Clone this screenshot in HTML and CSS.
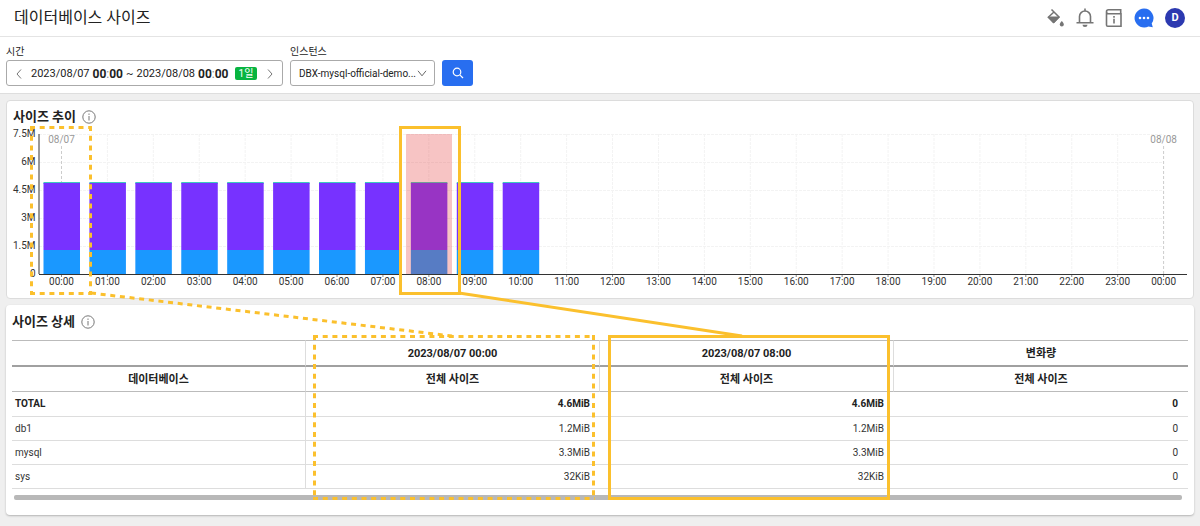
FILE: index.html
```html
<!DOCTYPE html>
<html lang="ko">
<head>
<meta charset="utf-8">
<title>데이터베이스 사이즈</title>
<meta name="viewport" content="width=device-width, initial-scale=1">
<link rel="stylesheet" href="styles.css">
</head>
<body>
<header class="topbar">
  <h1 class="page-title">데이터베이스 사이즈</h1>
  <nav class="tools" aria-label="도구">
    <button class="icon-button" aria-label="테마">
      <svg width="18" height="20" viewBox="0 0 18 20"><path d="M4.500 1.500l7.500 7.500-5.500 5.500L1.300 9.200 7.500 3.500" fill="none" stroke="#757575" stroke-width="1.500"/><path d="M1.300 9h11L6.700 15z" fill="#757575" stroke="#757575" stroke-linejoin="round"/><path d="M14.800 13c1.400 1.500 2 2.500 2 3.400a2 2 0 0 1-4 0c0-.9.600-1.900 2-3.400z" fill="#757575"/></svg>
    </button>
    <button class="icon-button" aria-label="알림">
      <svg width="18" height="20" viewBox="0 0 18 20"><path d="M.5 14.800h17M3.500 14.800V8.500a5.500 5.500 0 0 1 11 0v6.300M9 3V.5" fill="none" stroke="#757575" stroke-width="1.600"/><path d="M6.500 16.800h5a2.500 2.300 0 0 1-5 0z" fill="#757575"/></svg>
    </button>
    <button class="icon-button" aria-label="가이드">
      <svg width="18" height="20" viewBox="0 0 18 20"><path d="M16.500 1.800H3.500a2 2 0 0 0 0 4H16v12.400H2.800a1.300 1.300 0 0 1-1.300-1.300V3.800M15.700 1v4.800" fill="none" stroke="#757575" stroke-width="1.600"/><path d="M9 8v1.800M9 10.800v4.700" stroke="#757575" stroke-width="1.600"/></svg>
    </button>
    <button class="icon-button" aria-label="문의">
      <svg width="20" height="20" viewBox="0 0 20 20"><path d="M10 .5a9.500 9.500 0 1 0 4.500 17.900L18.800 19.300 17.700 15.500A9.500 9.500 0 0 0 10 .5z" fill="#286ef0"/><circle cx="6" cy="10" r="1.300" fill="#fff"/><circle cx="10" cy="10" r="1.300" fill="#fff"/><circle cx="14" cy="10" r="1.300" fill="#fff"/></svg>
    </button>
    <button class="avatar" aria-label="내 계정">D</button>
  </nav>
</header>

<form class="filters">
  <div class="field">
    <span class="field-label" id="time-label">시간</span>
    <div class="period" role="group" aria-labelledby="time-label">
      <button type="button" class="arrow" aria-label="이전"><svg width="6" height="10" viewBox="0 0 6 10"><path d="M5 .5L1 5l4 4.500"/></svg></button>
      <span class="period-text">
        <span>2023/08/07</span>
        <span class="clock">00<i>:</i>00</span>
        <span>~</span>
        <span>2023/08/08</span>
        <span class="clock">00<i>:</i>00</span>
      </span>
      <span class="day-badge">1일</span>
      <button type="button" class="arrow" aria-label="다음"><svg width="6" height="10" viewBox="0 0 6 10"><path d="M1 .5L5 5 1 9.500"/></svg></button>
    </div>
  </div>
  <div class="field">
    <label class="field-label" for="instance">인스턴스</label>
    <div class="select-wrap">
      <select id="instance" class="select"><option>DBX-mysql-official-demo...</option></select>
      <svg class="select-arrow" width="10" height="7" viewBox="0 0 10 7"><path d="M1 .8l4 5 4-5" fill="none" stroke="#666"/></svg>
    </div>
  </div>
  <button type="button" class="search" aria-label="검색"><svg width="12" height="12" viewBox="0 0 12 12"><circle cx="5" cy="5" r="3.800" fill="none" stroke="#fff" stroke-width="1.200"/><path d="M7.800 7.800L11 11" stroke="#fff" stroke-width="1.200"/></svg></button>
</form>

<main class="content">
  <section class="panel chart-panel">
    <h2 class="panel-title">사이즈 추이
      <svg class="info" width="14" height="14" viewBox="0 0 14 14"><circle cx="7" cy="7" r="6.200"/><path d="M7 3.500v1.400M7 6v4.500"/></svg>
    </h2>
    <svg class="chart" id="chart" role="img" aria-label="사이즈 추이"></svg>
  </section>

  <section class="panel detail-panel">
    <h2 class="panel-title">사이즈 상세
      <svg class="info" width="14" height="14" viewBox="0 0 14 14"><circle cx="7" cy="7" r="6.200"/><path d="M7 3.500v1.400M7 6v4.500"/></svg>
    </h2>
    <div class="table-area">
      <table class="sizes">
        <thead>
          <tr><th></th><th>2023/08/07 00:00</th><th>2023/08/07 08:00</th><th>변화량</th></tr>
          <tr><th>데이터베이스</th><th>전체 사이즈</th><th>전체 사이즈</th><th>전체 사이즈</th></tr>
        </thead>
        <tbody>
          <tr class="total"><td>TOTAL</td><td>4.6MiB</td><td>4.6MiB</td><td>0</td></tr>
          <tr><td>db1</td><td>1.2MiB</td><td>1.2MiB</td><td>0</td></tr>
          <tr><td>mysql</td><td>3.3MiB</td><td>3.3MiB</td><td>0</td></tr>
          <tr><td>sys</td><td>32KiB</td><td>32KiB</td><td>0</td></tr>
        </tbody>
      </table>
      <div class="scroll-thumb"></div>
    </div>
  </section>
  <svg class="callouts" id="callouts" aria-hidden="true"></svg>
</main>
<script src="chart.js"></script>
</body>
</html>
```
FILE: styles.css
```css
* { box-sizing: border-box; }

body {
  margin: 0;
  min-height: 100vh;
  background: #efefef;
  color: #222;
  font-family: Roboto, "Noto Sans CJK KR", sans-serif;
  font-size: 11px;
  line-height: 16px;
}

button, select { font: inherit; color: inherit; }
button { border: 0; padding: 0; background: none; cursor: pointer; }

.topbar {
  display: flex;
  align-items: center;
  justify-content: space-between;
  height: 37px;
  padding: 0 15px 0 14px;
  background: #fff;
  border-bottom: 1px solid #e4e4e4;
}
.page-title { margin: 0; font-size: 16px; line-height: 24px; font-weight: 400; }
.tools { display: flex; align-items: center; gap: 11px; }
.icon-button { display: flex; }
.icon-button svg, .arrow svg, .search svg { display: block; }
.avatar {
  width: 20px;
  height: 20px;
  border-radius: 50%;
  background: #2c39b0;
  color: #fff;
  font-weight: 700;
  text-align: center;
}

.filters {
  display: flex;
  align-items: flex-end;
  gap: 7px;
  padding: 5px 6px 7px;
  background: #fff;
  border-bottom: 1px solid #dedede;
}
.field { display: flex; flex-direction: column; }
.field-label { padding-top: 1px; font-size: 10px; line-height: 17px; }
.period {
  display: flex;
  align-items: center;
  width: 277px;
  height: 26px;
  padding: 1px 9px 0;
  border: 1px solid #aaa;
  border-radius: 3px;
}
.period-text { display: flex; align-items: center; gap: 3px; padding-left: 9px; }
.clock { font-size: 12px; font-weight: 700; }
.clock i { font-style: normal; font-weight: 400; color: #888; }
.arrow path { fill: none; stroke: #777; }
.day-badge {
  margin: 0 auto 0 6px;
  padding: 0 4px;
  border-radius: 2px;
  background: #08b440;
  color: #fff;
  font-size: 10px;
  line-height: 13px;
}
.select-wrap { position: relative; }
.select {
  display: block;
  width: 145px;
  height: 26px;
  padding: 1px 16px 0 8px;
  appearance: none;
  border: 1px solid #aaa;
  border-radius: 3px;
  background: #fff;
  font-size: 10px;
}
.select-arrow { position: absolute; top: 10px; right: 8px; pointer-events: none; }
.search {
  display: flex;
  align-items: center;
  justify-content: center;
  width: 31px;
  height: 26px;
  border-radius: 3px;
  background: #286ef0;
}

.content {
  position: relative;
  display: flex;
  flex-direction: column;
  gap: 6px;
  padding: 6px 6px 11px;
}
.panel { background: #fff; border-radius: 4px; }
.chart-panel { border: 1px solid #dcdcdc; }
.detail-panel { padding-bottom: 15px; box-shadow: 0 1px 2px #b4b4b4; }
.panel-title {
  display: flex;
  align-items: center;
  gap: 6px;
  margin: 0;
  padding: 6px 6px 0;
  font-size: 13px;
  line-height: 20px;
  font-weight: 700;
}
.detail-panel .panel-title { padding-top: 7px; }
.info { fill: none; stroke: #777; stroke-width: 1; }

.chart { display: block; width: 100%; height: 171px; }
.chart text { font-size: 10px; fill: #333; }
.chart .day { fill: #999; }
.end { text-anchor: end; }
.middle { text-anchor: middle; }
.grid { stroke: #f3f3f3; stroke-dasharray: 3 1; }
.day-line { stroke: #ccc; stroke-dasharray: 3 2; }
.axis { stroke: #333; }
.tick { stroke: #888; }
.bar-sys { fill: #3cc9c0; }
.bar-mysql { fill: #7732ff; }
.bar-db1 { fill: #1a98ff; }
.selected { fill: #e63c3c; fill-opacity: .3; }

.table-area { padding: 8px 6px 0; }
.sizes { width: 100%; table-layout: fixed; border-collapse: separate; border-spacing: 0; }
.sizes th, .sizes td { padding: 0 10px; line-height: 16px; }
.sizes th { height: 25px; padding-top: 2px; border-bottom: 1px solid #bbb; border-right: 1px solid #ddd; text-align: center; }
.sizes thead tr:first-child th { height: 27px; border-top: 1px solid #bbb; border-bottom: 2px solid #a0a0a0; }
.sizes th:last-child { border-right: 0; }
.sizes td { height: 24px; border-bottom: 1px solid #ddd; color: #333; font-size: 10px; text-align: right; }
.sizes td:first-child { padding: 0 3px; border-right: 1px solid #ddd; text-align: left; }
.sizes .total td { height: 25px; font-weight: 700; color: #222; }
.scroll-thumb { height: 5px; margin: 6px 6px 0 2px; border-radius: 2px; background: #b8b8b8; }

.callouts {
  position: absolute;
  inset: 0;
  width: 100%;
  height: 100%;
  overflow: visible;
  pointer-events: none;
}
.callouts * { fill: none; stroke: #fbc02d; stroke-width: 3; }
.callouts .dashed { stroke-dasharray: 5 4.7; }
```
FILE: chart.js
```js
const NS = "http://www.w3.org/2000/svg";

function add(parent, tag, attrs, text) {
  const node = document.createElementNS(NS, tag);
  for (const key in attrs) node.setAttribute(key, attrs[key]);
  if (text) node.textContent = text;
  parent.appendChild(node);
  return node;
}

const chart = document.getElementById("chart");
const W = 1186;
const pct = v => (v / W * 100) + "%";
const hourX = h => 54.5 + h * 45.92;
const TOP = 7, BASE = 147;

function line(x1, y1, x2, y2, cls) {
  add(chart, "line", { x1: pct(x1), y1, x2: pct(x2), y2, class: cls });
}

["0", "1.5M", "3M", "4.5M", "6M", "7.5M"].forEach((label, i) => {
  const y = BASE - i * 28;
  if (i) line(32, y + 0.5, hourX(24), y + 0.5, "grid");
  add(chart, "text", { x: pct(28.5), y: y + 3, class: "end" }, label);
});

for (let h = 0; h <= 24; h++) {
  const isDay = h % 24 === 0;
  const x = hourX(h);
  line(x, isDay ? TOP + 12 : TOP, x, BASE, isDay ? "day-line" : "grid");
  if (isDay) add(chart, "text", { x: pct(x), y: TOP + 9, class: "day middle" }, h ? "08/08" : "08/07");
}

for (let h = 0; h <= 10; h++) {
  const x = pct(hourX(h) - 18), width = pct(36.5);
  add(chart, "rect", { x, y: 55, width, height: 2, class: "bar-sys" });
  add(chart, "rect", { x, y: 56, width, height: 67, class: "bar-mysql" });
  add(chart, "rect", { x, y: 123, width, height: 24, class: "bar-db1" });
}
add(chart, "rect", { x: pct(399), y: TOP, width: pct(46), height: BASE - TOP, class: "selected" });

line(32, TOP, 32, BASE, "axis");
line(32, BASE + 0.5, 1180, BASE + 0.5, "axis");
for (let h = 0; h <= 24; h++) {
  line(hourX(h), BASE + 1, hourX(h), BASE + 3, "tick");
  add(chart, "text", { x: pct(hourX(h)), y: BASE + 11, class: "middle" }, String(h % 24).padStart(2, "0") + ":00");
}

const callouts = document.getElementById("callouts");
const share = v => (v / 12) + "%";
function mark(x1, y1, x2, y2, cls) {
  add(callouts, "line", { x1: share(x1), y1, x2: share(x2), y2, class: cls });
}
function box(x1, y1, x2, y2, cls) {
  mark(x1 - 1.5, y1, x2 + 1.5, y1, cls);
  mark(x2, y1 - 1.5, x2, y2 + 1.5, cls);
  mark(x1 - 1.5, y2, x2 + 1.5, y2, cls);
  mark(x1, y1 - 1.5, x1, y2 + 1.5, cls);
}
box(31.5, 33.5, 90.5, 199.5, "dashed");
box(314.5, 242.5, 593.5, 404.5, "dashed");
mark(91, 199, 452, 242, "dashed");
box(400.5, 33.5, 459.5, 199.5, "solid");
box(609.5, 242.5, 888.5, 404.5, "solid");
mark(459, 199, 742, 242, "solid");
```
